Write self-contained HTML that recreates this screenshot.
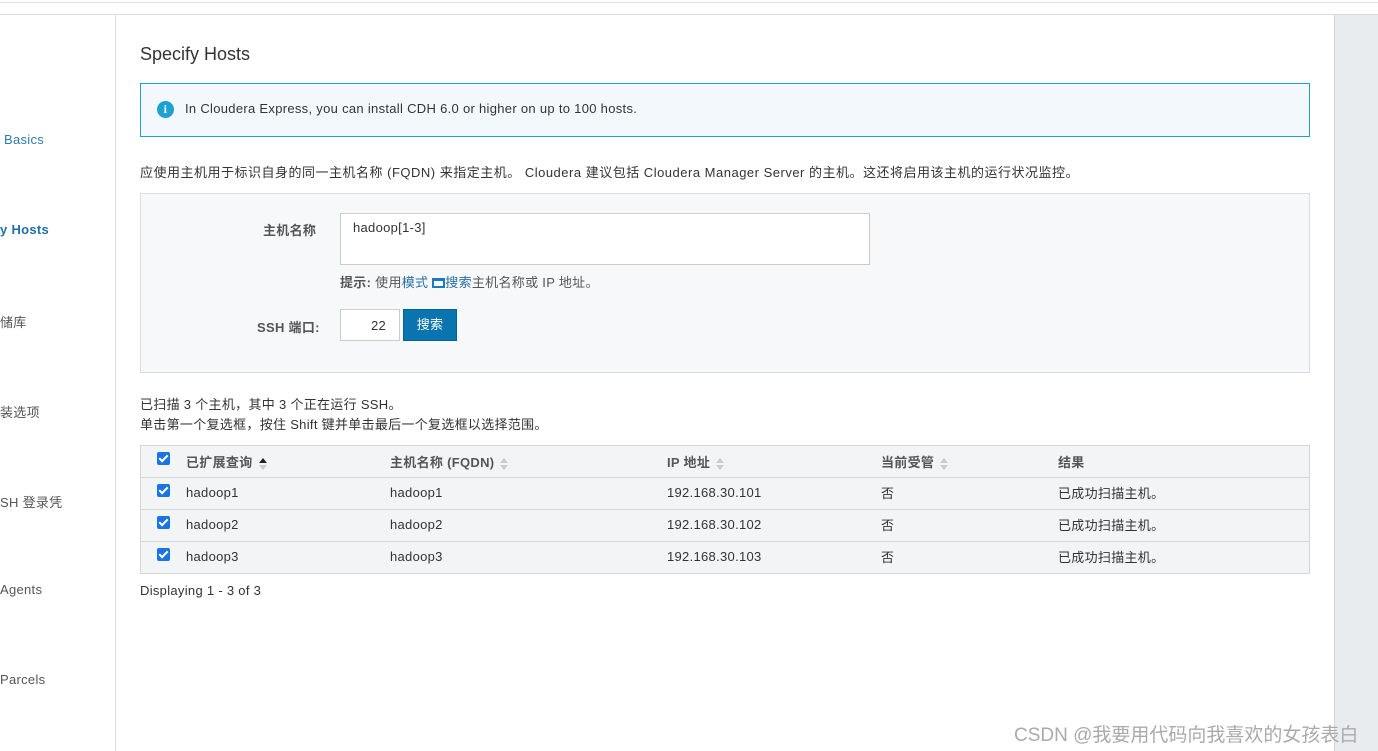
<!DOCTYPE html>
<html><head><meta charset="utf-8"><style>
*{box-sizing:border-box;margin:0;padding:0}
body{width:1378px;height:751px;overflow:hidden;background:#fff;font-family:"Liberation Sans","Noto Sans CJK SC",sans-serif;font-size:13px;letter-spacing:0.3px;color:#333;position:relative}
.a{position:absolute;white-space:nowrap}
.side{color:#555;font-size:13px}
.cb{position:absolute;width:13px;height:13px;background:#1a73e8;border-radius:2px}
.cb:after{content:"";position:absolute;left:4px;top:1px;width:3px;height:7px;border:solid #fff;border-width:0 2px 2px 0;transform:rotate(45deg)}
.row{position:absolute;left:140px;width:1170px;height:32px;border-top:1px solid #d6d6d6}
.sort{display:inline-block;width:8px;height:12px;vertical-align:middle;margin-left:6px;position:relative}
.sort:before{content:"";position:absolute;top:0;left:0;border:4px solid transparent;border-bottom:5px solid #ccc;border-top:0}
.sort:after{content:"";position:absolute;bottom:0;left:0;border:4px solid transparent;border-top:5px solid #ccc;border-bottom:0}
.up:before{border-bottom-color:#222}
</style></head><body>
<div class="a" style="left:0;top:2px;width:1378px;height:1px;background:#ddd"></div>
<div class="a" style="left:0;top:14px;width:1378px;height:1px;background:#ddd"></div>
<div class="a" style="left:115px;top:14px;width:1px;height:737px;background:#ddd"></div>
<div class="a" style="left:1334px;top:15px;width:44px;height:736px;background:#e9ecef;border-left:1px solid #d6d6d6"></div>

<div class="a side" style="left:4px;top:132px;color:#2d7bb0">Basics</div>
<div class="a side" style="left:0;top:222px;color:#1f6fa8;font-weight:bold">y Hosts</div>
<div class="a side" style="left:0;top:312px">储库</div>
<div class="a side" style="left:0;top:402px">装选项</div>
<div class="a side" style="left:0;top:492px">SH 登录凭</div>
<div class="a side" style="left:0;top:582px">Agents</div>
<div class="a side" style="left:0;top:672px">Parcels</div>

<div class="a" style="left:140px;top:44px;font-size:18px;letter-spacing:0;color:#333">Specify Hosts</div>
<div class="a" style="left:140px;top:83px;width:1170px;height:54px;background:#f3f8fc;border:1px solid #1fa0d3"></div>
<div class="a" style="left:157px;top:101px;width:17px;height:17px;border-radius:50%;background:#1fa0d3;color:#fff;font-weight:bold;font-size:12px;text-align:center;line-height:17px;font-family:'Liberation Serif',serif">i</div>
<div class="a" style="left:185px;top:101px;color:#333">In Cloudera Express, you can install CDH 6.0 or higher on up to 100 hosts.</div>

<div class="a" style="left:140px;top:162px;letter-spacing:0.5px">应使用主机用于标识自身的同一主机名称 (FQDN) 来指定主机。 Cloudera 建议包括 Cloudera Manager Server 的主机。这还将启用该主机的运行状况监控。</div>

<div class="a" style="left:140px;top:193px;width:1170px;height:180px;background:#f7f8fa;border:1px solid #ddd"></div>
<div class="a" style="left:263px;top:220px;font-weight:bold;color:#555">主机名称</div>
<div class="a" style="left:340px;top:213px;width:530px;height:52px;background:#fff;border:1px solid #ccc"></div>
<div class="a" style="left:353px;top:220px">hadoop[1-3]</div>
<div class="a" style="left:340px;top:272px;color:#555"><b>提示:</b> 使用<span style="color:#2a6ea6">模式 <span style="display:inline-block;width:13px;height:10px;border:2px solid #1a7bc0;border-top-width:3px;vertical-align:-1px"></span>搜索</span>主机名称或 IP 地址。</div>
<div class="a" style="left:257px;top:317px;font-weight:bold;color:#555">SSH 端口:</div>
<div class="a" style="left:340px;top:309px;width:60px;height:32px;background:#fff;border:1px solid #ccc;text-align:right;padding:8px 13px 0 0">22</div>
<div class="a" style="left:403px;top:309px;width:54px;height:32px;background:#0a74b0;border:1px solid #06638f;color:#fff;text-align:center;line-height:30px">搜索</div>

<div class="a" style="left:140px;top:394px">已扫描 3 个主机，其中 3 个正在运行 SSH。</div>
<div class="a" style="left:140px;top:414px">单击第一个复选框，按住 Shift 键并单击最后一个复选框以选择范围。</div>

<div class="a" style="left:140px;top:445px;width:1170px;height:129px;background:#f3f4f6;border:1px solid #d6d6d6"></div>
<div class="row" style="top:477px"></div>
<div class="row" style="top:509px"></div>
<div class="row" style="top:541px"></div>
<div class="cb" style="left:157px;top:452px"></div>
<div class="a" style="left:186px;top:452px;font-weight:bold;color:#555">已扩展查询<span class="sort up"></span></div>
<div class="a" style="left:390px;top:452px;font-weight:bold;color:#555">主机名称 (FQDN)<span class="sort"></span></div>
<div class="a" style="left:667px;top:452px;font-weight:bold;color:#555">IP 地址<span class="sort"></span></div>
<div class="a" style="left:881px;top:452px;font-weight:bold;color:#555">当前受管<span class="sort"></span></div>
<div class="a" style="left:1058px;top:452px;font-weight:bold;color:#555">结果</div>

<div class="cb" style="left:157px;top:484px"></div>
<div class="a" style="left:186px;top:485px">hadoop1</div><div class="a" style="left:390px;top:485px">hadoop1</div><div class="a" style="left:667px;top:485px">192.168.30.101</div><div class="a" style="left:881px;top:483px">否</div><div class="a" style="left:1058px;top:483px">已成功扫描主机。</div>
<div class="cb" style="left:157px;top:516px"></div>
<div class="a" style="left:186px;top:517px">hadoop2</div><div class="a" style="left:390px;top:517px">hadoop2</div><div class="a" style="left:667px;top:517px">192.168.30.102</div><div class="a" style="left:881px;top:515px">否</div><div class="a" style="left:1058px;top:515px">已成功扫描主机。</div>
<div class="cb" style="left:157px;top:548px"></div>
<div class="a" style="left:186px;top:549px">hadoop3</div><div class="a" style="left:390px;top:549px">hadoop3</div><div class="a" style="left:667px;top:549px">192.168.30.103</div><div class="a" style="left:881px;top:547px">否</div><div class="a" style="left:1058px;top:547px">已成功扫描主机。</div>

<div class="a" style="left:140px;top:583px">Displaying 1 - 3 of 3</div>
<div class="a" style="left:1014px;top:720px;font-size:19px;letter-spacing:0;color:#aaa">CSDN @我要用代码向我喜欢的女孩表白</div>
</body></html>
